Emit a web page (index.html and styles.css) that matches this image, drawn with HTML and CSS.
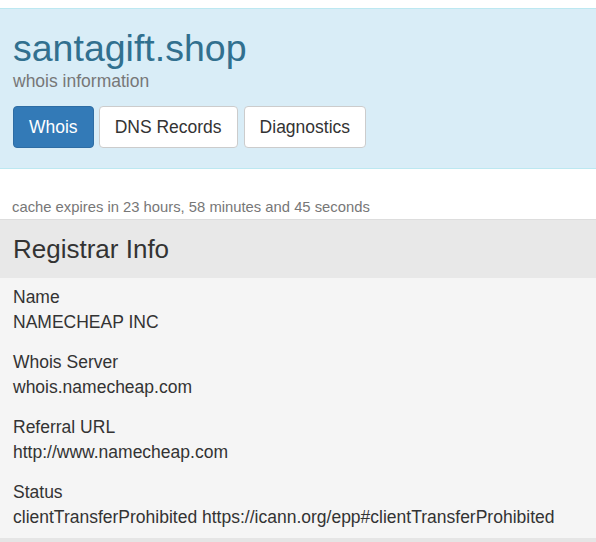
FILE: index.html
```html
<!DOCTYPE html>
<html>
<head>
<meta charset="utf-8">
<link rel="stylesheet" href="styles.css">
</head>
<body>
<div class="hero">
  <h1 class="title">santagift.shop</h1>
  <div class="subtitle">whois information</div>
  <div class="tabs">
    <span class="btn active">Whois</span>
    <span class="btn">DNS Records</span>
    <span class="btn">Diagnostics</span>
  </div>
</div>
<div class="cache">cache expires in 23 hours, 58 minutes and 45 seconds</div>
<div class="panel">
  <div class="panel-heading">Registrar Info</div>
  <div class="panel-body">
    <div class="field"><div>Name</div><div>NAMECHEAP INC</div></div>
    <div class="field"><div>Whois Server</div><div>whois.namecheap.com</div></div>
    <div class="field"><div>Referral URL</div><div>http://www.namecheap.com</div></div>
    <div class="field"><div>Status</div><div>clientTransferProhibited https://icann.org/epp#clientTransferProhibited</div></div>
  </div>
</div>
</body>
</html>
```
FILE: styles.css
```css
html, body { margin: 0; padding: 0; background: #fff; }
body {
  font-family: "Liberation Sans", Arial, sans-serif;
  color: #333;
  font-size: 17.5px;
  overflow: hidden;
}
.hero {
  margin-top: 8px;
  background: #d9edf7;
  border-top: 1px solid #bce8f1;
  border-bottom: 1px solid #bce8f1;
  padding: 19px 13px 19px;
  height: 121px;
  box-sizing: content-box;
}
.title {
  margin: 0;
  font-size: 37.5px;
  font-weight: normal;
  color: #31708f;
  line-height: 40px;
}
.subtitle {
  font-size: 17.5px;
  color: #777;
  line-height: 22px;
  margin-top: 2px;
}
.tabs {
  display: flex;
  gap: 5px;
  margin-top: 14px;
}
.btn {
  display: inline-block;
  font-size: 17.5px;
  line-height: 22px;
  padding: 9px 15px;
  background: #fff;
  border: 1px solid #ccc;
  border-radius: 4px;
  color: #333;
}
.btn.active {
  background: #337ab7;
  border-color: #2e6da4;
  color: #fff;
}
.tabs .btn:nth-child(3) { margin-left: 1px; }
.cache {
  font-size: 14.8px;
  color: #777;
  padding: 29px 12px 3px;
  line-height: 18px;
  border-bottom: 1px solid #ddd;
}
.panel {
  background: #f5f5f5;
  border-bottom: 4px solid #e5e5e5;
}
.panel-heading {
  background: #e8e8e8;
  font-size: 26px;
  line-height: 28px;
  padding: 15px 13px 15px;
}
.panel-body {
  padding: 7px 13px 8px;
}
.field {
  line-height: 25px;
  margin-bottom: 15px;
}
.field:last-child { margin-bottom: 0; }
```
